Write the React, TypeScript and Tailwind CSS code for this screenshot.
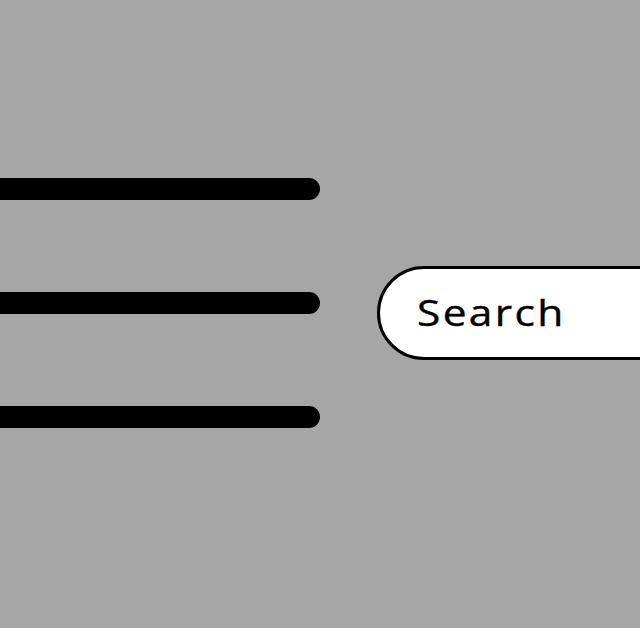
export default function App() {
  return (
    <div className="flex h-[628px] w-[640px] overflow-hidden bg-[#a6a6a6] font-['Open_Sans',sans-serif]">
      {/* menu bars, bleeding off the left edge */}
      <div className="flex w-[320px] shrink-0 flex-col gap-[92px] pt-[178px]">
        <div className="h-[22px] rounded-r-full bg-black" />
        <div className="h-[22px] rounded-r-full bg-black" />
        <div className="h-[22px] rounded-r-full bg-black" />
      </div>

      <div className="ml-[57px] mt-[266px] flex h-[94px] w-[320px] shrink-0 items-center rounded-l-[47px] border-[3px] border-black bg-white pl-[37px]">
        <span className="inline-block origin-left scale-x-[1.18] text-[36px] leading-none tracking-[2px] text-black [-webkit-text-stroke:0.4px_black]">
          Search
        </span>
      </div>
    </div>
  );
}
